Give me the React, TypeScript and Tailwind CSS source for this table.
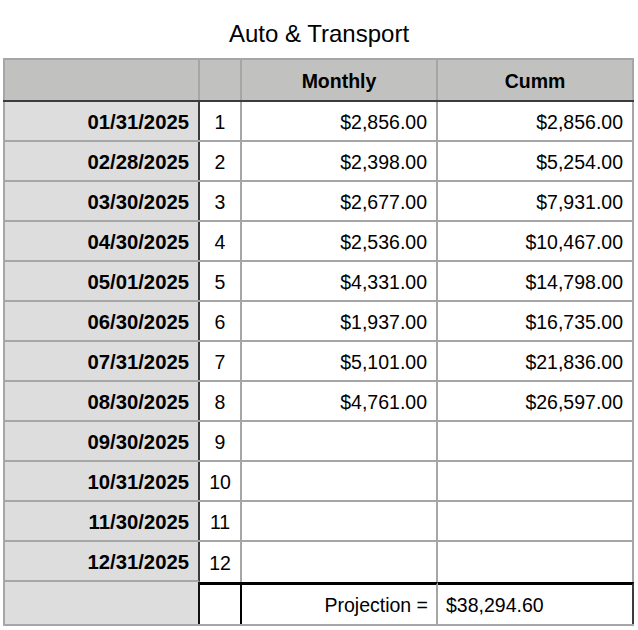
const rows: [string, number, string, string][] = [
  ['01/31/2025', 1, '$2,856.00', '$2,856.00'],
  ['02/28/2025', 2, '$2,398.00', '$5,254.00'],
  ['03/30/2025', 3, '$2,677.00', '$7,931.00'],
  ['04/30/2025', 4, '$2,536.00', '$10,467.00'],
  ['05/01/2025', 5, '$4,331.00', '$14,798.00'],
  ['06/30/2025', 6, '$1,937.00', '$16,735.00'],
  ['07/31/2025', 7, '$5,101.00', '$21,836.00'],
  ['08/30/2025', 8, '$4,761.00', '$26,597.00'],
  ['09/30/2025', 9, '', ''],
  ['10/31/2025', 10, '', ''],
  ['11/30/2025', 11, '', ''],
  ['12/31/2025', 12, '', ''],
]

export default function App() {
  return (
    <div className="w-[638px] h-[630px] bg-white text-black font-['Liberation_Sans',Arial,sans-serif]">
      {/* Title */}
      <div className="h-[58px] flex items-center justify-center pt-[9px] text-[24px]">
        Auto &amp; Transport
      </div>

      <div className="ml-[3px] w-[631px] border-t-2 border-b-2 border-[#a6a6a6] text-[19.5px]">
        {/* Header */}
        <div className="flex h-[42px] bg-[#c1c2c0] border-b-2 border-[#3c3c3c] font-bold">
          <div className="w-[197px] border-l-2 border-r-2 border-[#a6a6a6]" />
          <div className="w-[42px] border-r-2 border-[#a6a6a6]" />
          <div className="w-[196px] border-r-2 border-[#a6a6a6] flex items-center justify-center pt-[3px]">Monthly</div>
          <div className="w-[196px] border-r-2 border-[#a6a6a6] flex items-center justify-center pt-[3px]">Cumm</div>
        </div>

        {/* Body */}
        {rows.map(([date, n, monthly, cumm], i) => (
          <div key={date} className={`flex h-[40px] ${i < rows.length - 1 ? 'border-b-2' : ''} border-[#a6a6a6]`}>
            <div
              className={`w-[197px] bg-[#dddddd] border-l-2 border-l-[#a6a6a6] border-r-2 border-r-[#3c3c3c] flex items-center justify-end pr-[9px] pt-[3px] font-bold text-[20.3px] ${i === rows.length - 1 ? 'border-b-2 border-b-[#a6a6a6]' : ''}`}
            >
              {date}
            </div>
            <div className="w-[42px] border-r-2 border-[#a6a6a6] flex items-center justify-center pt-[3px]">{n}</div>
            <div className="w-[196px] border-r-2 border-[#a6a6a6] flex items-center justify-end pr-[9px] pt-[3px]">{monthly}</div>
            <div className="w-[196px] border-r-2 border-[#a6a6a6] flex items-center justify-end pr-[9px] pt-[3px]">{cumm}</div>
          </div>
        ))}

        {/* Footer */}
        <div className="flex h-[42px]">
          <div className="w-[197px] bg-[#dddddd] border-l-2 border-[#a6a6a6] border-r-2 border-r-[#111]" />
          <div className="w-[42px] border-t-[3px] border-black border-r-2" />
          <div className="w-[196px] border-t-[3px] border-t-black border-r-2 border-r-[#a6a6a6] flex items-center justify-end pr-[8px] pt-[3px]">
            Projection =
          </div>
          <div className="w-[196px] border-t-[3px] border-t-black border-r-2 border-r-[#3c3c3c] flex items-center pl-[8px] pt-[3px]">
            $38,294.60
          </div>
        </div>
      </div>
    </div>
  )
}
